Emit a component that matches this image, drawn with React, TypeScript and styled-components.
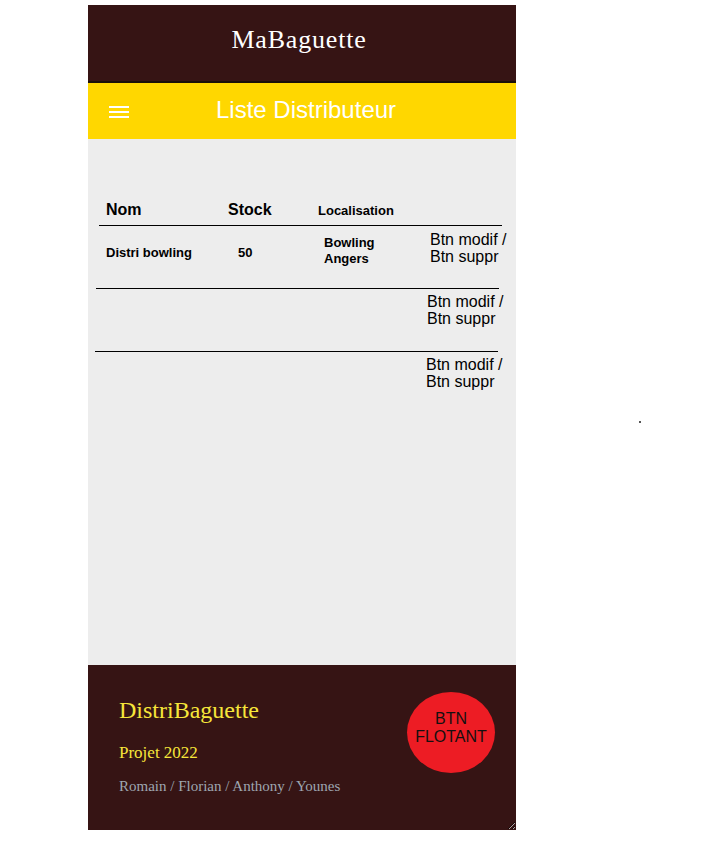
import React from "react";
import styled, { createGlobalStyle } from "styled-components";

const GlobalStyle = createGlobalStyle`
  html, body { margin: 0; padding: 0; background: #ffffff; }
  body { font-family: "Liberation Sans", Arial, sans-serif; }
`;

const Phone = styled.div`
  width: 428px;
  margin: 5px 0 0 88px;
  display: flex;
  flex-direction: column;
`;

const TopBar = styled.header`
  box-sizing: border-box;
  height: 78px;
  padding-top: 20px;
  background: #361414;
  border-bottom: 2px solid #1b1009;
  display: flex;
  justify-content: center;
  align-items: flex-start;
`;

const Brand = styled.h1`
  margin: 0 6px 0 0;
  font: 400 26px/30px "Liberation Serif", "Times New Roman", serif;
  letter-spacing: 0.8px;
  color: #ffffff;
`;

const NavBar = styled.nav`
  box-sizing: border-box;
  height: 56px;
  padding-left: 21px;
  background: #ffd700;
  display: flex;
  align-items: center;
`;

const MenuIcon = styled.svg`
  display: block;
  width: 20px;
  height: 12px;
  margin-top: 2px;
`;

const PageTitle = styled.h2`
  margin: 0 0 3px 87px;
  font: 400 24px/28px "Liberation Sans", Arial, sans-serif;
  color: #ffffff;
`;

const Content = styled.main`
  box-sizing: border-box;
  height: 526px;
  padding-top: 61px;
  background: #ededed;
`;

const columns = "129px 89px 113px 1fr";

const HeadRow = styled.div`
  box-sizing: border-box;
  width: 403px;
  height: 25px;
  margin-left: 11px;
  display: grid;
  grid-template-columns: ${columns};
  align-items: baseline;
`;

const HeadCell = styled.div<{ $size: number; $pl: number; $pt?: number }>`
  padding-left: ${(p) => p.$pl}px;
  padding-top: ${(p) => p.$pt ?? 0}px;
  font: 700 ${(p) => p.$size}px/18px "Liberation Sans", Arial, sans-serif;
  color: #000;
  white-space: nowrap;
`;

const DataRow = styled.div<{ $offset: number }>`
  box-sizing: border-box;
  width: 403px;
  height: 63px;
  margin-left: ${(p) => p.$offset}px;
  border-top: 1px solid #000;
  display: grid;
  grid-template-columns: ${columns};
  align-items: start;
`;

const DataCell = styled.div<{ $pt: number; $pl: number }>`
  padding-top: ${(p) => p.$pt}px;
  padding-left: ${(p) => p.$pl}px;
  font: 700 13px/16px "Liberation Sans", Arial, sans-serif;
  color: #000;
`;

const Actions = styled.div<{ $pt: number }>`
  grid-column: 4;
  padding-top: ${(p) => p.$pt}px;
  font: 400 16px/17px "Liberation Sans", Arial, sans-serif;
  color: #000;
  white-space: nowrap;
`;

const ActionLine = styled.span`
  display: block;
`;

const Footer = styled.footer`
  box-sizing: border-box;
  height: 165px;
  padding: 27px 21px 0 31px;
  background: #361414;
  display: flex;
  justify-content: space-between;
  align-items: flex-start;
  resize: both;
  overflow: hidden;
`;

const FooterText = styled.div`
  padding-top: 4px;
  display: flex;
  flex-direction: column;
`;

const FooterBrand = styled.div`
  font: 400 24px/28px "Liberation Serif", "Times New Roman", serif;
  color: #f6e63a;
`;

const Project = styled.div`
  margin-top: 19px;
  font: 400 17px/20px "Liberation Serif", "Times New Roman", serif;
  color: #f6e63a;
`;

const Team = styled.div`
  margin-top: 15px;
  font: 400 15px/17px "Liberation Serif", "Times New Roman", serif;
  color: #9ea6b0;
`;

const Fab = styled.button`
  box-sizing: border-box;
  width: 88px;
  height: 81px;
  padding: 0 0 10px;
  border: none;
  border-radius: 50%;
  background: #ed1c24;
  color: #141010;
  font: 400 16px/18px "Liberation Sans", Arial, sans-serif;
  text-align: center;
  display: flex;
  align-items: center;
  justify-content: center;
`;

const StrayDot = styled.div`
  position: absolute;
  left: 639px;
  top: 421px;
  width: 2px;
  height: 2px;
  background: #555;
`;

const rows = [
  { offset: 11, name: "Distri bowling", stock: "50", loc: ["Bowling", "Angers"], pt: 5 },
  { offset: 8, pt: 4 },
  { offset: 7, pt: 4 },
];

export default function App() {
  return (
    <>
      <GlobalStyle />
      <Phone>
        <TopBar>
          <Brand>MaBaguette</Brand>
        </TopBar>
        <NavBar>
          <MenuIcon viewBox="0 0 20 12" aria-label="menu">
            <rect x="0" y="0" width="20" height="2" fill="#fff" />
            <rect x="0" y="5" width="20" height="2" fill="#fff" />
            <rect x="0" y="10" width="20" height="2" fill="#fff" />
          </MenuIcon>
          <PageTitle>Liste Distributeur</PageTitle>
        </NavBar>
        <Content>
          <HeadRow>
            <HeadCell $size={16} $pl={7}>Nom</HeadCell>
            <HeadCell $size={16} $pl={0} $pt={1}>Stock</HeadCell>
            <HeadCell $size={13} $pl={1}>Localisation</HeadCell>
          </HeadRow>
          {rows.map((r, i) => (
            <DataRow key={i} $offset={r.offset}>
              {r.name && (
                <>
                  <DataCell $pt={19} $pl={7}>{r.name}</DataCell>
                  <DataCell $pt={19} $pl={10}>{r.stock}</DataCell>
                  <DataCell $pt={9} $pl={7}>
                    {r.loc!.map((l) => (
                      <ActionLine key={l}>{l}</ActionLine>
                    ))}
                  </DataCell>
                </>
              )}
              <Actions $pt={r.pt}>
                <ActionLine>Btn modif /</ActionLine>
                <ActionLine>Btn suppr</ActionLine>
              </Actions>
            </DataRow>
          ))}
        </Content>
        <Footer>
          <FooterText>
            <FooterBrand>DistriBaguette</FooterBrand>
            <Project>Projet 2022</Project>
            <Team>Romain / Florian / Anthony / Younes</Team>
          </FooterText>
          <Fab>BTN FLOTANT</Fab>
        </Footer>
      </Phone>
      <StrayDot />
    </>
  );
}
